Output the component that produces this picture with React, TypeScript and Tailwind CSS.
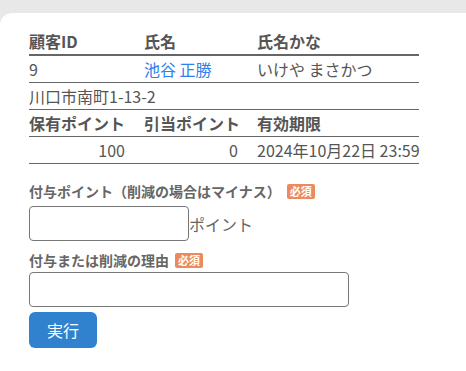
import React from "react";

const font = "font-['Noto_Sans_CJK_JP','Noto_Sans',sans-serif]";

const Required = () => (
  <span className="ml-[6px] inline-flex h-[15px] items-center rounded-[2px] bg-[#ec8a5e] px-[3px] text-[11px] font-bold leading-none text-white">
    必須
  </span>
);

export default function App() {
  return (
    <div className={`min-h-[371px] bg-[#e8e8e8] pt-[13px] ${font}`}>
      <div className="min-h-[358px] rounded-tl-[12px] bg-white px-[29px] pt-[15px]">
        <table className="w-[390px] table-fixed border-collapse text-[16px] leading-[26px] text-[#555]">
          <colgroup>
            <col className="w-[115px]" />
            <col className="w-[113px]" />
            <col />
          </colgroup>
          <tbody>
            <tr className="border-b-2 border-[#666]">
              <th className="text-left font-bold">顧客ID</th>
              <th className="text-left font-bold">氏名</th>
              <th className="text-left font-bold">氏名かな</th>
            </tr>
            <tr className="border-b border-[#666]">
              <td>9</td>
              <td className="text-[#2f80ed]">池谷 正勝</td>
              <td>いけや まさかつ</td>
            </tr>
            <tr className="border-b border-[#666]">
              <td colSpan={3}>川口市南町1-13-2</td>
            </tr>
            <tr className="border-b border-[#666]">
              <th className="text-left font-bold">保有ポイント</th>
              <th className="text-left font-bold">引当ポイント</th>
              <th className="text-left font-bold">有効期限</th>
            </tr>
            <tr className="border-b border-[#666]">
              <td className="pr-[19px] text-right">100</td>
              <td className="pr-[19px] text-right">0</td>
              <td className="whitespace-nowrap">2024年10月22日 23:59</td>
            </tr>
          </tbody>
        </table>

        <div className="mt-[17px] flex flex-col">
          <label className="flex items-center text-[14px] font-bold leading-[20px] text-[#666]">
            付与ポイント（削減の場合はマイナス）
            <Required />
          </label>
          <div className="mt-[5px] flex items-center">
            <input
              type="text"
              className="h-[35px] w-[160px] rounded-[4px] border border-[#777] px-2 outline-none"
            />
            <span className="text-[16px] text-[#666]">ポイント</span>
          </div>
          <label className="mt-[9px] flex items-center text-[14px] font-bold leading-[20px] text-[#666]">
            付与または削減の理由
            <Required />
          </label>
          <input
            type="text"
            className="mt-[2px] h-[35px] w-[320px] rounded-[4px] border border-[#777] px-2 outline-none"
          />
          <button className="mt-[5px] h-[36px] w-[68px] rounded-[6px] bg-[#3182ce] text-[16px] text-white">
            実行
          </button>
        </div>
      </div>
    </div>
  );
}
